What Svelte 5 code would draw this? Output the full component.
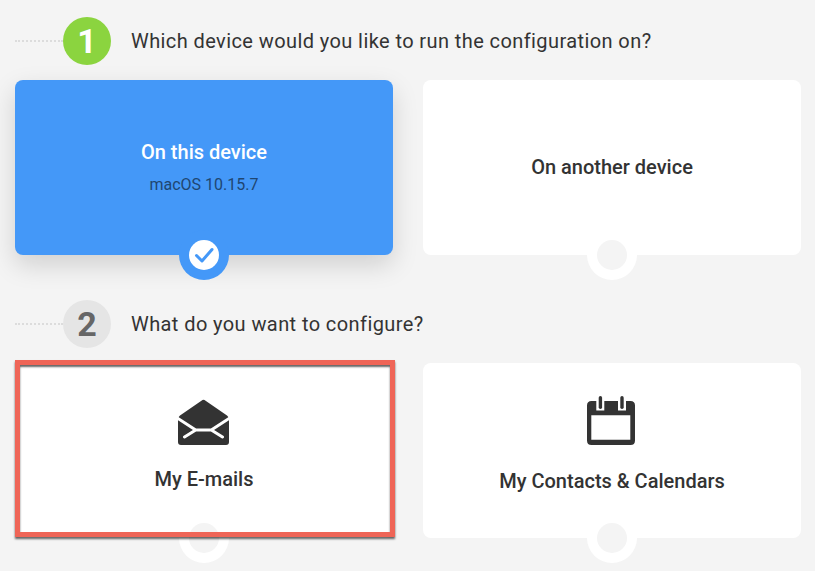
<script>
  const steps = [
    {
      n: 1, active: true, q: 'Which device would you like to run the configuration on?',
      cards: [
        { title: 'On this device', sub: 'macOS 10.15.7', selected: true },
        { title: 'On another device' }
      ]
    },
    {
      n: 2, active: false, q: 'What do you want to configure?',
      cards: [
        { title: 'My E-mails', icon: 'mail', marked: true },
        { title: 'My Contacts & Calendars', icon: 'cal' }
      ]
    }
  ];
</script>

<main class="page">
  {#each steps as s}
    <section class="step">
      <header class="head">
        <span class="dots"></span>
        <span class="num" class:on={s.active}>{s.n}</span>
        <h2>{s.q}</h2>
      </header>
      <div class="cards">
        {#each s.cards as c}
          <div class="card" class:selected={c.selected} class:mailcard={c.icon === 'mail'} class:calcard={c.icon === 'cal'}>
            {#if c.icon === 'mail'}
              <svg class="ic mail" width="51" height="46" viewBox="0 0 51 46">
                <path fill="#333" d="M24.500 1 Q25.500 0.300 26.500 1 L49 16.500 Q51 18 51 20.500 V43 Q51 46 48 46 H3 Q0 46 0 43 V20.500 Q0 18 2 16.500 Z"/>
                <path fill="none" stroke="#fff" stroke-width="3" stroke-linecap="round" stroke-linejoin="round" d="M-1 18.800 L17.700 31 H33.300 L52 18.800 M17.700 31 L6.500 38 M33.300 31 L44.500 38"/>
              </svg>
            {:else if c.icon === 'cal'}
              <svg class="ic cal" width="50" height="51" viewBox="0 0 50 51">
                <path fill="#333" fill-rule="evenodd" d="M5.500 6 H44.500 Q49 6 49 10.500 V45.500 Q49 50 44.500 50 H5.500 Q1 50 1 45.500 V10.500 Q1 6 5.500 6 Z M5.300 20.300 V44.700 H44.300 V20.300 Z"/>
                <path fill="#fff" d="M10.300 5 H18.300 V15.500 H10.300 Z M32 5 H40 V15.500 H32 Z"/>
                <rect x="12.700" y="1" width="3.400" height="13" rx="1.700" fill="#333"/>
                <rect x="34.300" y="1" width="3.400" height="13" rx="1.700" fill="#333"/>
              </svg>
            {/if}
            <div class="title">{c.title}</div>
            {#if c.sub}<div class="sub">{c.sub}</div>{/if}
            <span class="knob">
              <span class="hole">
                {#if c.selected}
                  <svg width="30" height="30" viewBox="0 0 30 30">
                    <path d="M7.500 15.500 L13 21 L23 9.500" fill="none" stroke="#4498f8" stroke-width="3" stroke-linecap="round" stroke-linejoin="round"/>
                  </svg>
                {/if}
              </span>
            </span>
            {#if c.marked}<span class="mark"></span>{/if}
          </div>
        {/each}
      </div>
    </section>
  {/each}
</main>

<style>
  :global(body) {
    margin: 0;
    background: #f4f4f4;
  }
  .page {
    height: 571px;
    box-sizing: border-box;
    padding: 17px 14px 0 15px;
    overflow: hidden;
    font-family: Roboto, "Liberation Sans", sans-serif;
    color: #333;
    display: flex;
    flex-direction: column;
    gap: 45px;
  }
  .head {
    display: flex;
    align-items: center;
    height: 48px;
  }
  .dots {
    width: 48px;
    border-top: 2px dotted #dcdcdc;
  }
  .num {
    width: 48px;
    height: 48px;
    border-radius: 50%;
    background: #e5e5e5;
    color: #666;
    font-size: 34px;
    font-weight: 700;
    line-height: 48px;
    text-align: center;
  }
  .num.on {
    background: #8bd43f;
    color: #fff;
  }
  h2 {
    margin: 0 0 0 20px;
    font-size: 20px;
    font-weight: 400;
    letter-spacing: 0.41px;
  }
  .cards {
    display: grid;
    grid-template-columns: 378px 378px;
    gap: 30px;
    margin-top: 15px;
  }
  .card {
    position: relative;
    height: 175px;
    box-sizing: border-box;
    background: #fff;
    border-radius: 8px;
    padding-bottom: 2px;
    display: flex;
    flex-direction: column;
    align-items: center;
    justify-content: center;
  }
  .card.selected {
    background: #4498f8;
    padding-bottom: 0;
    box-shadow: 0 10px 26px rgba(0, 0, 0, 0.15);
  }
  .card.mailcard {
    padding-bottom: 11px;
  }
  .card.calcard {
    padding-bottom: 14px;
  }
  .title {
    font-size: 20px;
    font-weight: 500;
  }
  .selected .title {
    color: #fff;
    margin-top: -2px;
  }
  .sub {
    margin-top: 11px;
    font-size: 16px;
    color: #1f4671;
  }
  .ic {
    display: block;
    margin-right: 2px;
  }
  .mail {
    margin-bottom: 22px;
  }
  .cal {
    margin-bottom: 23px;
  }
  .knob {
    position: absolute;
    left: 164px;
    bottom: -25px;
    width: 50px;
    height: 50px;
    border-radius: 50%;
    background: #fff;
    display: flex;
    align-items: center;
    justify-content: center;
  }
  .hole {
    width: 30px;
    height: 30px;
    border-radius: 50%;
    background: #f4f4f4;
    display: block;
  }
  .selected .knob {
    background: #4498f8;
  }
  .selected .hole {
    background: #fff;
  }
  .hole svg {
    display: block;
  }
  .mark {
    position: absolute;
    left: 0;
    top: -3px;
    width: 380px;
    height: 177px;
    box-sizing: border-box;
    border: 5px solid #ef6557;
    box-shadow: 0 2px 2px rgba(0, 0, 0, 0.6), inset 0 2px 2px rgba(0, 0, 0, 0.6);
  }
</style>
